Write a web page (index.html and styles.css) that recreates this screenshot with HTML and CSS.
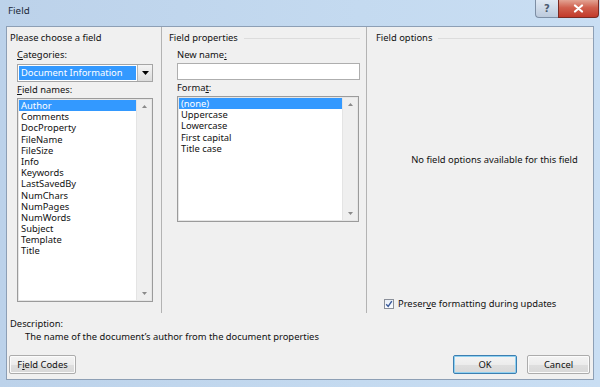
FILE: index.html
```html
<!DOCTYPE html>
<html>
<head>
<meta charset="utf-8">
<link rel="stylesheet" href="styles.css">
</head>
<body>
<div class="window">
  <div class="titlebar">
    <span class="title">Field</span>
    <div class="caption-btns">
      <div class="cap-btn help">?</div>
      <div class="cap-btn close">
        <svg width="11" height="9" viewBox="0 0 11 9"><path d="M2 1.5 L9 7.5 M9 1.5 L2 7.5" stroke="#fff" stroke-width="2.2" stroke-linecap="round"/></svg>
      </div>
    </div>
  </div>
  <div class="client">
    <div class="panes">
      <section class="pane pane-left">
        <div class="group-title plain">Please choose a field</div>
        <div class="label l-cat"><u>C</u>ategories:</div>
        <div class="combo">
          <div class="combo-value"><span class="sel">Document Information</span></div>
          <div class="combo-btn"><svg width="7" height="4" viewBox="0 0 7 4"><path d="M0 0 H7 L3.5 4 Z" fill="#000"/></svg></div>
        </div>
        <div class="label l-names"><u>F</u>ield names:</div>
        <div class="listbox names">
          <ul class="items">
            <li class="selected">Author</li>
            <li>Comments</li>
            <li>DocProperty</li>
            <li>FileName</li>
            <li>FileSize</li>
            <li>Info</li>
            <li>Keywords</li>
            <li>LastSavedBy</li>
            <li>NumChars</li>
            <li>NumPages</li>
            <li>NumWords</li>
            <li>Subject</li>
            <li>Template</li>
            <li>Title</li>
          </ul>
          <div class="vscroll">
            <svg width="5" height="3" viewBox="0 0 5 3"><path d="M0 3 L2.5 0 L5 3 Z" fill="#8a8a8a"/></svg>
            <svg width="5" height="3" viewBox="0 0 5 3"><path d="M0 0 L2.5 3 L5 0 Z" fill="#8a8a8a"/></svg>
          </div>
        </div>
      </section>
      <section class="pane pane-mid">
        <div class="group-title">Field properties</div>
        <div class="label l-cat">New name<u>:</u></div>
        <div class="textbox"></div>
        <div class="label l-fmt">Forma<u>t</u>:</div>
        <div class="listbox formats">
          <ul class="items">
            <li class="selected">(none)</li>
            <li>Uppercase</li>
            <li>Lowercase</li>
            <li>First capital</li>
            <li>Title case</li>
          </ul>
          <div class="vscroll">
            <svg width="5" height="3" viewBox="0 0 5 3"><path d="M0 3 L2.5 0 L5 3 Z" fill="#8a8a8a"/></svg>
            <svg width="5" height="3" viewBox="0 0 5 3"><path d="M0 0 L2.5 3 L5 0 Z" fill="#8a8a8a"/></svg>
          </div>
        </div>
      </section>
      <section class="pane pane-right">
        <div class="group-title">Field options</div>
        <div class="no-options">No field options available for this field</div>
        <label class="check-row">
          <span class="checkbox"><svg width="8" height="8" viewBox="0 0 8 8"><path d="M1.2 4.2 L3.2 6.4 L6.8 1.2" stroke="#3a5a9a" stroke-width="1.4" fill="none"/></svg></span>
          <span>Preser<u>v</u>e formatting during updates</span>
        </label>
      </section>
    </div>
    <div class="desc">
      <div class="desc-label">Description:</div>
      <div class="desc-text">The name of the document’s author from the document properties</div>
    </div>
    <div class="footer">
      <button class="btn">F<u>i</u>eld Codes</button>
      <div class="footer-right">
        <button class="btn default">OK</button>
        <button class="btn">Cancel</button>
      </div>
    </div>
  </div>
</div>
</body>
</html>
```

FILE: styles.css
```css
* { box-sizing: border-box; }
html, body { margin: 0; padding: 0; }
body {
  font-family: "Noto Sans", "Open Sans", sans-serif;
  font-size: 9.4px;
  color: #111;
}
u { text-decoration: underline; text-underline-offset: 1px; }

.window {
  width: 600px;
  height: 387px;
  background: linear-gradient(90deg, #bcd2ea 0%, #c4daf0 60%, #c9def3 100%);
  padding: 0 6px;
  display: flex;
  flex-direction: column;
}
.titlebar {
  height: 26px;
  display: flex;
  align-items: flex-start;
  justify-content: space-between;
  margin-right: -5px;
}
.title {
  font-size: 9.8px;
  color: #1d2a3a;
  padding: 4px 0 0 2px;
}
.caption-btns { display: flex; }
.cap-btn {
  height: 18px;
  display: flex;
  align-items: center;
  justify-content: center;
  border: 1px solid #7d8ea4;
  border-top: none;
}
.cap-btn.help {
  width: 23px;
  border-radius: 0 0 0 4px;
  background: linear-gradient(#dfe8f3, #bccadc);
  color: #4a5a70;
  font-size: 10px;
  font-weight: bold;
  font-family: "DejaVu Sans", sans-serif;
  border-right: none;
}
.cap-btn.close {
  width: 41px;
  border-radius: 0 0 4px 0;
  background: linear-gradient(#e3a393 0%, #d0604e 45%, #c2392a 100%);
  border-color: #7a2a22;
}

.client {
  height: 354px;
  background: #f0f0f0;
  border: 1px solid #8d9fb5;
  display: flex;
  flex-direction: column;
}
.panes {
  display: flex;
  height: 286px;
}
.pane {
  padding-top: 5px;
}
.pane-left {
  width: 155px;
  padding-left: 3px;
  border-right: 1px solid #b3b3b3;
}
.pane-mid {
  width: 205px;
  padding-left: 7px;
  padding-right: 6px;
  border-right: 1px solid #b3b3b3;
}
.pane-right {
  flex: 1;
  padding-left: 9px;
  display: flex;
  flex-direction: column;
}
.group-title {
  line-height: 12px;
  display: flex;
  align-items: center;
}
.group-title::after {
  content: "";
  flex: 1;
  border-top: 1px solid #dcdcdc;
  margin-left: 6px;
  margin-top: 1px;
}
.group-title.plain::after { display: none; }

.label { line-height: 12px; padding-left: 7px; }
.pane-mid .label { padding-left: 8px; }
.l-cat { margin-top: 5px; }
.l-names { margin-top: 2px; }
.l-fmt { margin-top: 2px; }

.combo {
  margin: 3px 0 0 7px;
  width: 136px;
  height: 18px;
  display: flex;
  border: 1px solid #a5a5a5;
  background: #fff;
}
.combo-value {
  flex: 1;
  padding: 1px;
  display: flex;
}
.sel {
  flex: 1;
  background: #3399ff;
  color: #fff;
  line-height: 14px;
  padding-left: 2px;
}
.combo-btn {
  width: 15px;
  border-left: 1px solid #b5b5b5;
  background: linear-gradient(#f4f4f4, #dcdcdc);
  display: flex;
  align-items: center;
  justify-content: center;
}

.textbox {
  margin: 2px 0 0 8px;
  height: 17px;
  background: #fff;
  border: 1px solid #aeaeae;
}

.listbox {
  display: flex;
  background: #fff;
  border: 1px solid #9b9b9b;
  box-shadow: inset 0 0 0 1px #e6e6e6;
  margin-top: 2px;
}
.listbox.names { margin-left: 7px; width: 136px; height: 204px; }
.listbox.formats { margin-left: 8px; width: 182px; height: 126px; }
.items {
  list-style: none;
  margin: 0;
  padding: 1px 0 0 1px;
  flex: 1;
}
.items li {
  line-height: 11.2px;
  height: 11.2px;
  padding-left: 2px;
}
.items li.selected { background: #3399ff; color: #fff; }
.vscroll {
  width: 15px;
  margin: 1px 1px 1px 0;
  background: #efefef;
  border-left: 1px solid #e4e4e4;
  display: flex;
  flex-direction: column;
  justify-content: space-between;
  align-items: center;
  padding: 5px 0;
}

.no-options {
  margin-top: 110px;
  padding-left: 20px;
  text-align: center;
  line-height: 12px;
}
.check-row {
  margin-top: auto;
  margin-bottom: 3px;
  padding-left: 8px;
  display: flex;
  align-items: center;
  gap: 4px;
  line-height: 12px;
}
.checkbox {
  width: 10px;
  height: 10px;
  border: 1px solid #8a8f99;
  background: linear-gradient(#e8eef6, #fafcff);
  display: flex;
  align-items: center;
  justify-content: center;
}

.desc { padding-left: 3px; margin-top: 5px; }
.desc-label { line-height: 12px; }
.desc-text { line-height: 12px; margin-top: 1px; padding-left: 15px; }

.footer {
  margin-top: auto;
  margin-bottom: 5px;
  padding: 0 3px 0 2px;
  display: flex;
  justify-content: space-between;
}
.footer-right { display: flex; gap: 10px; }
.btn {
  font-family: inherit;
  font-size: 9.4px;
  color: #111;
  height: 19px;
  padding: 0;
  border: 1px solid #acacac;
  border-radius: 2px;
  background: linear-gradient(#f4f4f4 0%, #ececec 50%, #dfdfdf 51%, #d8d8d8 100%);
  box-shadow: inset 0 0 0 1px #fbfbfb;
}
.btn:first-child { width: 67px; }
.footer-right .btn { width: 63px; }
.btn.default {
  width: 64px;
  border-color: #3c7fb1;
  box-shadow: inset 0 0 0 1px #8fd0f0;
}
```
